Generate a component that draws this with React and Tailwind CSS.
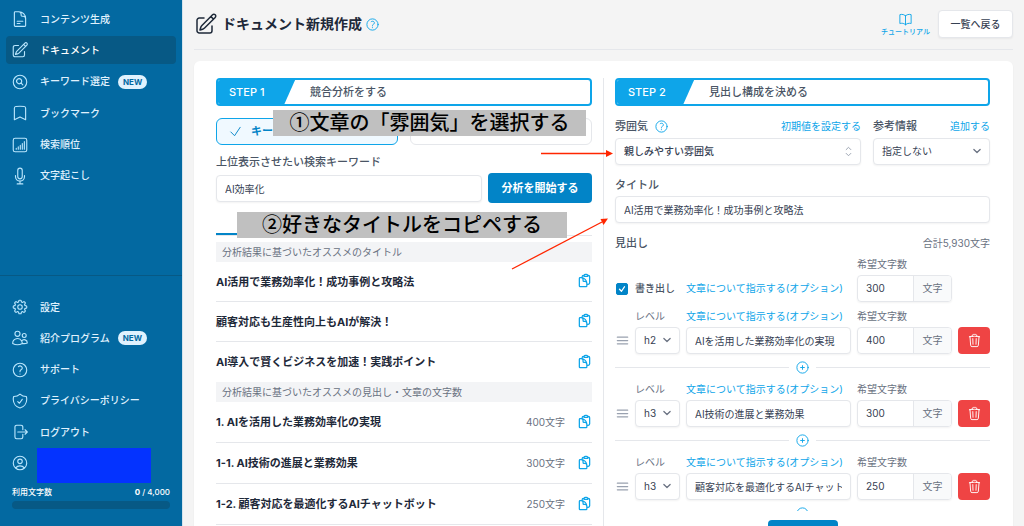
import React, { useState } from "react";
import clsx from "clsx";
import {
    HiOutlineArrowRightOnRectangle,
    HiOutlineBars3,
    HiOutlineBookmark,
    HiOutlineBookOpen,
    HiOutlineCheck,
    HiOutlineChevronDown,
    HiOutlineChevronUpDown,
    HiOutlineClipboardDocument,
    HiOutlineCog8Tooth,
    HiOutlineDocumentText,
    HiOutlineMagnifyingGlassCircle,
    HiOutlineMicrophone,
    HiOutlinePencilSquare,
    HiOutlinePlusCircle,
    HiOutlineQuestionMarkCircle,
    HiOutlineShieldCheck,
    HiOutlineTrash,
    HiOutlineUserCircle,
    HiOutlineUsers,
} from "react-icons/hi2";

const RankIcon = ({ className }) => (
    <svg viewBox="0 0 24 24" fill="none" stroke="currentColor" strokeWidth="1.5" strokeLinecap="round" className={className}>
        <rect x="3" y="3" width="18" height="18" rx="2.5" />
        <path d="M7 17.500v-1M9.700 17.500v-3M12.400 17.500v-5M15.100 17.500v-7.500M17.800 17.500v-10" />
    </svg>
);

const mainMenu = [
    { label: "コンテンツ生成", icon: HiOutlineDocumentText },
    { label: "ドキュメント", icon: HiOutlinePencilSquare, active: true },
    { label: "キーワード選定", icon: HiOutlineMagnifyingGlassCircle, isNew: true },
    { label: "ブックマーク", icon: HiOutlineBookmark },
    { label: "検索順位", icon: RankIcon },
    { label: "文字起こし", icon: HiOutlineMicrophone },
];

const subMenu = [
    { label: "設定", icon: HiOutlineCog8Tooth },
    { label: "紹介プログラム", icon: HiOutlineUsers, isNew: true },
    { label: "サポート", icon: HiOutlineQuestionMarkCircle },
    { label: "プライバシーポリシー", icon: HiOutlineShieldCheck },
    { label: "ログアウト", icon: HiOutlineArrowRightOnRectangle },
];

const titles = [
    "AI活用で業務効率化！成功事例と攻略法",
    "顧客対応も生産性向上もAIが解決！",
    "AI導入で賢くビジネスを加速！実践ポイント",
];

const suggestions = [
    { text: "1. AIを活用した業務効率化の実現", count: 400 },
    { text: "1-1. AI技術の進展と業務効果", count: 300 },
    { text: "1-2. 顧客対応を最適化するAIチャットボット", count: 250 },
];

const initialHeadings = [
    { id: 1, level: "h2", text: "AIを活用した業務効率化の実現", count: 400 },
    { id: 2, level: "h3", text: "AI技術の進展と業務効果", count: 300 },
    { id: 3, level: "h3", text: "顧客対応を最適化するAIチャットボット", count: 250 },
];

const fieldClass = "h-[27px] w-full rounded border border-gray-200 bg-white px-2 text-[10px] text-gray-700 shadow-xs";

function MenuItem({ label, icon: Icon, active, isNew }) {
    return (
        <a
            href="#"
            className={clsx(
                "flex h-7 items-center rounded px-[5px] text-[10px] font-medium",
                active ? "bg-[#075985] text-white" : "text-[#e0f2fe]"
            )}
        >
            <Icon className="mr-[11px] size-[18px] shrink-0 text-[#bae6fd]" />
            {label}
            {isNew && (
                <span className="ml-2 rounded-full bg-[#e0f2fe] px-[5px] text-[8px] leading-[14px] font-bold text-[#0369a1]">NEW</span>
            )}
        </a>
    );
}

function Sidebar() {
    return (
        <aside className="flex w-[183px] shrink-0 flex-col border-r border-[#d5e3ec] bg-[#0369a1]">
            <nav className="mx-[6px] mt-[5px] flex h-[185px] flex-col justify-between">
                {mainMenu.map((item) => (
                    <MenuItem key={item.label} {...item} />
                ))}
            </nav>
            <div className="mt-auto border-t border-[#075985] pt-[17px]">
                <nav className="mx-[6px] flex h-[153px] flex-col justify-between">
                    {subMenu.map((item) => (
                        <MenuItem key={item.label} {...item} />
                    ))}
                </nav>
                <div className="mt-[2px] ml-[11px] flex h-[35px] gap-2">
                    <HiOutlineUserCircle className="mt-[6px] size-[18px] text-[#bae6fd]" />
                    <div className="h-full w-[114px] bg-[#0433ff]" />
                </div>
                <div className="mx-3 mt-px flex justify-between text-[8px] leading-4 font-medium text-white">
                    <span>利用文字数</span>
                    <span>
                        <b>0</b> / 4,000
                    </span>
                </div>
                <div className="mx-3 mt-px mb-[17px] h-2 rounded bg-[#075985]" />
            </div>
        </aside>
    );
}

function StepHeader({ step, title }) {
    return (
        <div className="flex h-7 items-center overflow-hidden rounded border-2 border-[#0ea5e9] bg-white text-[11px]">
            <div className="flex h-7 w-[78px] items-center bg-[#0ea5e9] pl-[11px] font-medium text-white [clip-path:polygon(0_0,100%_0,84%_100%,0_100%)]">
                {step}
            </div>
            <h2 className="pl-[14px] font-medium text-gray-600">{title}</h2>
        </div>
    );
}

function ResultRow({ text, count, last }) {
    return (
        <li
            className={clsx(
                "flex items-center pt-px text-[11px]",
                count ? "h-[41px]" : "h-10",
                !last && "border-b border-gray-200"
            )}
        >
            <span className="flex-1 font-bold text-gray-800">{text}</span>
            {count && <span className="mr-3 text-[10px] text-gray-500">{count}文字</span>}
            <button type="button" aria-label="コピー" className="pb-[3px] text-[#0ea5e9]">
                <HiOutlineClipboardDocument className="size-[15px] stroke-2" />
            </button>
        </li>
    );
}

function AnalysisPanel() {
    const [keyword, setKeyword] = useState("AI効率化");

    return (
        <section className="pr-[11px]">
            <StepHeader step="STEP 1" title="競合分析をする" />
            <div className="mt-3 grid grid-cols-2 gap-3 text-[11px] font-bold">
                <button type="button" className="flex h-[27px] items-center gap-2 rounded-md border border-[#0ea5e9] bg-[#f0f9ff] px-[11px] text-[#0284c7]">
                    <HiOutlineCheck className="size-[15px]" />
                    キー
                </button>
                <button type="button" aria-label="URL" className="h-[27px] rounded-md border border-gray-200" />
            </div>
            <label htmlFor="keyword" className="mt-[9px] block text-[11px] leading-4 font-medium text-gray-600">
                上位表示させたい検索キーワード
            </label>
            <div className="mt-[3px] flex items-center gap-[6px]">
                <input id="keyword" value={keyword} onChange={(e) => setKeyword(e.target.value)} className={fieldClass} />
                <button type="button" className="h-[30px] w-[104px] shrink-0 rounded bg-[#0284c7] text-[11px] font-bold text-white">
                    分析を開始する
                </button>
            </div>
            <div className="grid h-[33px] grid-cols-2 border-b border-gray-200">
                <div className="border-b-2 border-[#0284c7]" />
            </div>
            <h3 className="mt-[6px] h-5 bg-gray-100 px-[6px] text-[10px] leading-5 text-gray-500">
                分析結果に基づいたオススメのタイトル
            </h3>
            <ul>
                {titles.map((text, i) => (
                    <ResultRow key={text} text={text} last={i === titles.length - 1} />
                ))}
            </ul>
            <h3 className="h-5 bg-gray-100 px-[6px] text-[10px] leading-5 text-gray-500">
                分析結果に基づいたオススメの見出し・文章の文字数
            </h3>
            <ul>
                {suggestions.map((item) => (
                    <ResultRow key={item.text} {...item} />
                ))}
            </ul>
        </section>
    );
}

function CountField({ id, value }) {
    return (
        <div className="flex h-[27px] overflow-hidden rounded border border-gray-200 text-[10px] shadow-xs">
            <input id={id} defaultValue={value} className="w-14 border-r border-gray-200 px-2 text-gray-700" />
            <span className="flex flex-1 items-center justify-center bg-gray-50 text-gray-500">文字</span>
        </div>
    );
}

function HeadingRow({ heading, onRemove }) {
    const { id, level, text, count } = heading;

    return (
        <li>
            <div className="grid grid-cols-[14px_45px_1fr_95px_32px] items-center gap-x-[6px] gap-y-[3px] text-[10px] text-gray-500">
                <label htmlFor={`level-${id}`} className="col-start-2 leading-4">レベル</label>
                <a href="#" className="leading-4 whitespace-nowrap text-[#0ea5e9]">文章について指示する(オプション)</a>
                <label htmlFor={`count-${id}`} className="col-span-2 leading-4">希望文字数</label>
                <HiOutlineBars3 className="size-[15px] stroke-2 text-gray-400" />
                <div className="relative">
                    <select id={`level-${id}`} defaultValue={level} className={clsx(fieldClass, "appearance-none")}>
                        <option>h2</option>
                        <option>h3</option>
                    </select>
                    <HiOutlineChevronDown className="pointer-events-none absolute top-2 right-2 size-[10px] stroke-3" />
                </div>
                <input aria-label="見出し" defaultValue={text} className={fieldClass} />
                <CountField id={`count-${id}`} value={count} />
                <button
                    type="button"
                    aria-label="削除"
                    onClick={() => onRemove(id)}
                    className="flex h-[27px] items-center justify-center rounded bg-[#ef4444] text-white"
                >
                    <HiOutlineTrash className="size-[15px]" />
                </button>
            </div>
            <div className="flex h-[27px] items-center gap-[6px]">
                <hr className="flex-1 border-gray-200" />
                <button type="button" aria-label="見出しを追加" className="text-[#0ea5e9]">
                    <HiOutlinePlusCircle className="size-[15px]" />
                </button>
                <hr className="flex-1 border-gray-200" />
            </div>
        </li>
    );
}

function OutlinePanel() {
    const [headings, setHeadings] = useState(initialHeadings);

    const handleRemove = (id) => {
        setHeadings(headings.filter((h) => h.id !== id));
    };

    return (
        <section className="border-l border-gray-200 pl-[11px] text-[11px] text-gray-600">
            <StepHeader step="STEP 2" title="見出し構成を決める" />
            <div className="mt-3 grid grid-cols-[1fr_117px] gap-x-3 gap-y-1">
                <div className="flex h-4 items-center">
                    <label htmlFor="mood" className="font-medium">雰囲気</label>
                    <HiOutlineQuestionMarkCircle className="ml-[6px] size-[15px] text-[#0ea5e9]" />
                    <a href="#" className="ml-auto text-[10px] text-[#0ea5e9]">初期値を設定する</a>
                </div>
                <div className="flex h-4 items-center justify-between">
                    <label htmlFor="reference" className="font-medium">参考情報</label>
                    <a href="#" className="text-[10px] text-[#0ea5e9]">追加する</a>
                </div>
                <div className="relative">
                    <select id="mood" className={clsx(fieldClass, "appearance-none font-medium")}>
                        <option>親しみやすい雰囲気</option>
                    </select>
                    <HiOutlineChevronUpDown className="pointer-events-none absolute top-[6px] right-[5px] size-[15px] text-gray-400" />
                </div>
                <div className="relative">
                    <select id="reference" className={clsx(fieldClass, "appearance-none")}>
                        <option>指定しない</option>
                    </select>
                    <HiOutlineChevronDown className="pointer-events-none absolute top-2 right-2 size-[10px] stroke-3 text-gray-500" />
                </div>
            </div>
            <label htmlFor="title" className="mt-3 block leading-4 font-medium">タイトル</label>
            <input id="title" defaultValue="AI活用で業務効率化！成功事例と攻略法" className={clsx(fieldClass, "mt-[3px]")} />
            <div className="mt-3 flex justify-between leading-4">
                <h3 className="font-medium">見出し</h3>
                <span className="text-[10px] text-gray-500">合計5,930文字</span>
            </div>
            <div className="mt-[5px] h-[255px] overflow-hidden">
                <div className="mb-[6px] grid grid-cols-[65px_1fr_95px_32px] items-center gap-x-[6px] gap-y-[3px] text-[10px]">
                    <label htmlFor="intro-count" className="col-start-3 leading-4 text-gray-500">希望文字数</label>
                    <label className="col-start-1 flex items-center gap-[7px] font-medium whitespace-nowrap">
                        <span className="relative ml-px flex size-3 shrink-0">
                            <input type="checkbox" defaultChecked className="peer size-3 appearance-none rounded-xs border border-gray-300 checked:border-[#0284c7] checked:bg-[#0284c7]" />
                            <HiOutlineCheck className="pointer-events-none absolute top-[2px] left-[2px] size-2 stroke-[4] text-white" />
                        </span>
                        書き出し
                    </label>
                    <a href="#" className="whitespace-nowrap text-[#0ea5e9]">文章について指示する(オプション)</a>
                    <CountField id="intro-count" value={300} />
                </div>
                <ul>
                    {headings.map((heading) => (
                        <HeadingRow key={heading.id} heading={heading} onRemove={handleRemove} />
                    ))}
                </ul>
            </div>
            <button type="button" aria-label="次へ" className="mx-auto mt-[9px] block h-[30px] w-[70px] rounded bg-[#0284c7]" />
        </section>
    );
}

// Numbered hints and arrows laid over the form
function Guide() {
    return (
        <div className="pointer-events-none absolute inset-0 font-['Noto_Sans_CJK_JP',sans-serif] text-xl font-medium text-black">
            <p className="absolute top-[110px] left-[90px] w-[313px] bg-[#c0c0c0] pb-[2px] text-center leading-6">①文章の「雰囲気」を選択する</p>
            <p className="absolute top-[212px] left-[54px] w-[330px] bg-[#c0c0c0] pb-[2px] text-center leading-6">②好きなタイトルをコピペする</p>
            <svg width="110" height="130" viewBox="0 0 110 130" className="absolute top-[145px] left-[325px]" stroke="#ff2600" fill="#ff2600">
                <path d="M33 8.500H99" strokeWidth="1.300" />
                <path d="M98 5L105 8.500L98 12Z" stroke="none" />
                <path d="M4 124L94 77" strokeWidth="1.300" />
                <path d="M92.500 74L100 73.500L95.500 80Z" stroke="none" />
            </svg>
        </div>
    );
}

export default function App() {
    return (
        <div className="flex h-screen overflow-hidden bg-[#f4f4f4] font-['Inter','Noto_Sans_CJK_JP',sans-serif]">
            <Sidebar />
            <main className="relative flex-1 overflow-hidden px-[11px]">
                <header className="flex h-[50px] items-center border-b border-gray-200 pb-px">
                    <HiOutlinePencilSquare className="size-6 text-gray-800" />
                    <h1 className="ml-1 text-sm font-bold text-gray-800">ドキュメント新規作成</h1>
                    <HiOutlineQuestionMarkCircle className="ml-[3px] size-[15px] text-[#0ea5e9]" />
                    <a href="#" className="mr-2 ml-auto flex flex-col items-center text-[7px] leading-[10px] font-medium text-[#0ea5e9]">
                        <HiOutlineBookOpen className="size-[15px]" />
                        チュートリアル
                    </a>
                    <button type="button" className="h-7 w-[75px] rounded border border-gray-200 bg-white text-[10px] font-medium text-gray-700 shadow-xs">
                        一覧へ戻る
                    </button>
                </header>
                <div className="mt-[11px] grid grid-cols-2 rounded-md bg-white py-[17px] pr-[23px] pl-[22px] shadow-xs">
                    <AnalysisPanel />
                    <OutlinePanel />
                </div>
                <Guide />
            </main>
        </div>
    );
}
